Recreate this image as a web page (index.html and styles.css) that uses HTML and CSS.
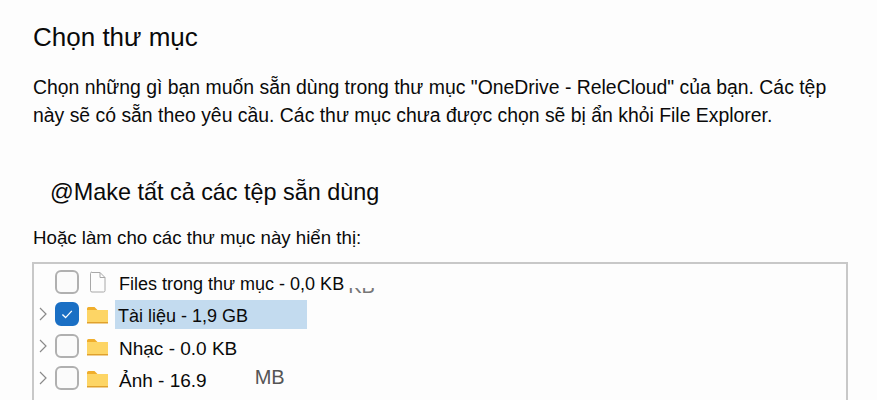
FILE: index.html
```html
<!DOCTYPE html>
<html lang="vi">
<head>
    <meta charset="UTF-8">
    <title>Chọn thư mục</title>
    <link rel="stylesheet" href="styles.css">
</head>
<body>
    <div class="page">
        <h1>Chọn thư mục</h1>
        <p class="intro">Chọn những gì bạn muốn sẵn dùng trong thư mục "OneDrive - ReleCloud" của bạn. Các tệp này sẽ có sẵn theo yêu cầu. Các thư mục chưa được chọn sẽ bị ẩn khỏi File Explorer.</p>
        <h2>@Make tất cả các tệp sẵn dùng</h2>
        <p class="hint">Hoặc làm cho các thư mục này hiển thị:</p>
        <div class="tree">
            <div class="row">
                <span class="arrow"></span>
                <span class="check"></span>
                <svg class="icon" viewBox="0 0 22 22"><path d="M5 1.500h8l5 5v13a1.500 1.500 0 0 1-1.500 1.500h-11.500a1.500 1.500 0 0 1-1.500-1.500v-17a1.500 1.500 0 0 1 1.500-1.500z" fill="#fdfdfd" stroke="#a8a8a8"/><path d="M13 1.500v5h5" fill="none" stroke="#a8a8a8"/></svg>
                <span class="label">Files trong thư mục - 0,0 KB</span>
                <span class="ghost">KB</span>
            </div>
            <div class="row">
                <svg class="arrow" viewBox="0 0 8 14"><path d="M1 1l6 6-6 6" fill="none" stroke="#8a8a8a" stroke-width="1.200"/></svg>
                <span class="check on"><svg viewBox="0 0 24 24"><path d="M6.500 12.500l3.800 3.800 7.500-8" fill="none" stroke="#fff" stroke-width="1.600"/></svg></span>
                <svg class="icon" viewBox="0 0 22 22"><use href="#folder"/></svg>
                <span class="label selected">Tài liệu - 1,9 GB</span>
            </div>
            <div class="row">
                <svg class="arrow" viewBox="0 0 8 14"><path d="M1 1l6 6-6 6" fill="none" stroke="#8a8a8a" stroke-width="1.200"/></svg>
                <span class="check"></span>
                <svg class="icon" viewBox="0 0 22 22"><use href="#folder"/></svg>
                <span class="label large">Nhạc - 0.0 KB</span>
            </div>
            <div class="row">
                <svg class="arrow" viewBox="0 0 8 14"><path d="M1 1l6 6-6 6" fill="none" stroke="#8a8a8a" stroke-width="1.200"/></svg>
                <span class="check"></span>
                <svg class="icon" viewBox="0 0 22 22"><use href="#folder"/></svg>
                <span class="label large">Ảnh - 16.9<span class="unit">MB</span></span>
            </div>
        </div>
    </div>

    <svg class="defs" width="0" height="0">
        <symbol id="folder" viewBox="0 0 22 22">
            <path d="M0 5.500a1.500 1.500 0 0 1 1.500-1.500h6l3 3h-10.500z" fill="#f0ae2c"/>
            <path d="M0 7h21v13h-21z" fill="#fdd565"/>
            <path d="M0 19h21v1.500h-21z" fill="#e0a12c"/>
        </symbol>
    </svg>
</body>
</html>
```

FILE: styles.css
```css
* {
    margin: 0;
    padding: 0;
    box-sizing: border-box;
}

body {
    font-family: "Liberation Sans", Arial, sans-serif;
    background: #fdfdfd;
    color: #0a0a0a;
    height: 400px;
    overflow: hidden;
}

.page {
    padding: 22px 28px 0 33px;
}

h1 {
    font-size: 26px;
    font-weight: 400;
    line-height: 30px;
}

.intro {
    font-size: 19.400px;
    line-height: 28px;
    margin-top: 21px;
    width: 800px;
}

h2 {
    font-size: 23.400px;
    font-weight: 400;
    line-height: 28px;
    margin: 49px 0 0 17px;
}

.hint {
    font-size: 18.700px;
    line-height: 24px;
    margin-top: 20px;
}

.tree {
    border: 2px solid #c8c8c8;
    border-bottom: none;
    margin: 12px 0 0 -1px;
    width: 816px;
    height: 140px;
    padding-top: 2px;
}

.row {
    display: flex;
    align-items: center;
    height: 32px;
}

.arrow {
    width: 8px;
    height: 14px;
    margin-left: 5px;
    flex: none;
}

.check {
    width: 24px;
    height: 24px;
    margin-left: 8px;
    border: 2px solid #b0b0b0;
    border-radius: 6px;
    background: #fbfbfb;
    flex: none;
}

.check.on {
    background: #1a6fc4;
    border-color: #1a6fc4;
}

.check svg {
    display: block;
    width: 100%;
    height: 100%;
}

.icon {
    width: 22px;
    height: 22px;
    margin-left: 8px;
    flex: none;
}

.label {
    font-size: 18px;
    line-height: 25px;
    margin-left: 6px;
    padding: 4px 0 0 4px;
    white-space: nowrap;
}

.large {
    font-size: 19px;
}

.selected {
    width: 192px;
    padding-left: 3px;
    background: #c3dbef;
}

/* leftover of the text under the first row: only its lower edge shows */
.ghost {
    margin: 8px 0 0 4px;
    color: #777;
    font-size: 20px;
    line-height: 24px;
    clip-path: inset(14px 0 0 0);
}

.unit {
    margin-left: 48px;
    color: #555;
    font-size: 20px;
    position: relative;
    top: -3px;
}

.defs {
    position: absolute;
}
```
